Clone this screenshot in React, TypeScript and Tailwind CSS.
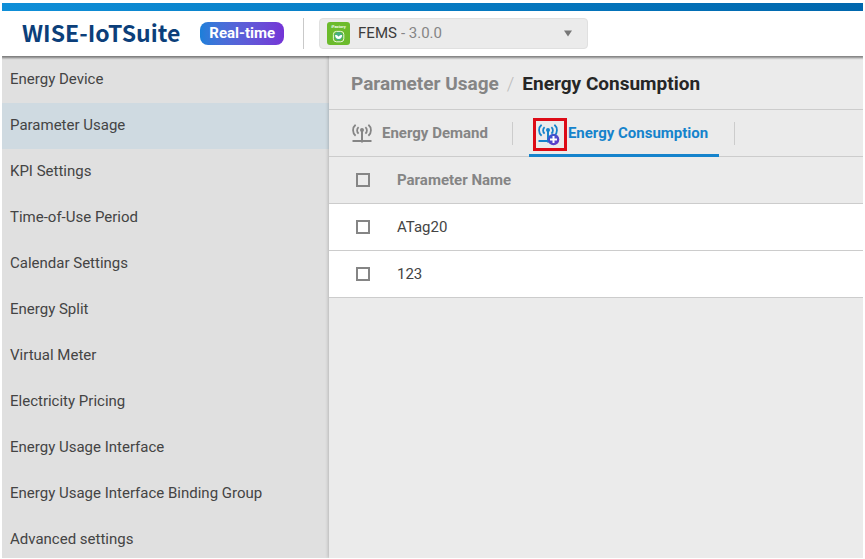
import React, { useState } from "react";

const menuItems = [
  "Energy Device",
  "Parameter Usage",
  "KPI Settings",
  "Time-of-Use Period",
  "Calendar Settings",
  "Energy Split",
  "Virtual Meter",
  "Electricity Pricing",
  "Energy Usage Interface",
  "Energy Usage Interface Binding Group",
  "Advanced settings",
];

const parameters = ["ATag20", "123"];

function AntennaIcon({ withPlus = false }: { withPlus?: boolean }) {
  return (
    <svg
      className="h-5 w-5 shrink-0 overflow-visible"
      viewBox="0 0 20 20"
      fill="none"
      stroke="currentColor"
      strokeWidth="1.8"
      aria-hidden="true"
    >
      <path d="M3.6 1.8C.2 4.6.2 10 3.6 12.8M6.6 4.2C4.6 6 4.6 8.8 6.6 10.6M16.4 1.8c3.4 2.8 3.4 8.2 0 11M13.4 4.2c2 1.8 2 4.600 0 6.400" />
      <path d="M10 7v12.5" strokeWidth="2" />
      <circle cx="10" cy="7" r="2" fill="currentColor" stroke="none" />
      <path d={withPlus ? "M.5 18H11" : "M.5 18h19"} strokeWidth="2" />
      {withPlus && (
        <g stroke="none">
          <defs>
            <linearGradient id="plusFill" x1="0" y1="0" x2="1" y2="1">
              <stop offset="0" stopColor="#2f5fd0" />
              <stop offset="1" stopColor="#6a35c8" />
            </linearGradient>
          </defs>
          <circle cx="15.5" cy="16.5" r="5.8" fill="url(#plusFill)" />
          <path d="M15.5 13v7M12 16.5h7" stroke="#fff" strokeWidth="2" />
        </g>
      )}
    </svg>
  );
}

function ProductIcon() {
  return (
    <svg className="h-[23px] w-[23px] shrink-0" viewBox="0 0 23 23" aria-hidden="true">
      <rect width="23" height="23" rx="3" fill="#6cbb2c" />
      <text
        x="11.5"
        y="6.2"
        textAnchor="middle"
        fontSize="4"
        fontWeight="700"
        fill="#f2fbe9"
        fontFamily="Roboto, sans-serif"
      >
        iFactory
      </text>
      <rect x="6.4" y="9.4" width="10.4" height="10.4" rx="3" fill="none" stroke="#e6f7dc" strokeWidth="1" />
      <circle cx="11.6" cy="14.2" r="4.2" fill="#45ae83" />
      <path d="M11.6 17c-2.4-.2-3.6-1.6-3.5-4 1.9 0 3 .6 3.5 1.8.5-1.2 1.6-1.8 3.5-1.8.1 2.4-1.1 3.8-3.5 4Z" fill="#fff" />
    </svg>
  );
}

function Tick({ label }: { label: string }) {
  return (
    <input
      type="checkbox"
      aria-label={label}
      className="block h-[14px] w-[14px] appearance-none border-2 border-[#858585] checked:bg-[#1583cc]"
    />
  );
}

function Header() {
  return (
    <header className="relative z-10 shrink-0 bg-white shadow-[0_1px_2px_1px_rgba(0,0,0,0.45)]">
      <div className="h-2 bg-linear-to-r from-[#0f8fd8] to-[#0067ad]" />
      <div className="flex h-[45px] items-center">
        <span className="ml-5 pb-[3px] font-['Noto_Sans_CJK_SC','Noto_Sans',sans-serif] text-[23px] leading-8 font-bold text-[#0c3f7a]">
          WISE-IoTSuite
        </span>
        <span className="ml-5 rounded-lg bg-linear-to-r from-[#1a7fd9] to-[#7433d6] px-[9px] leading-[23px] font-bold text-white">
          Real-time
        </span>
        <span className="ml-[19px] h-[31px] w-px bg-[#c9c9c9]" />
        <div className="relative ml-[15px] flex h-[31px] w-[269px] items-center rounded border border-[#e0e0e0] bg-[#ebebeb] pl-[7px]">
          <ProductIcon />
          <label htmlFor="version" className="ml-2 text-[#3c3c3c]">
            FEMS
          </label>
          <select
            id="version"
            className="h-full min-w-0 flex-1 cursor-pointer appearance-none bg-transparent pl-1 text-[#858585] outline-none"
          >
            <option>- 3.0.0</option>
          </select>
          <svg
            className="pointer-events-none absolute right-[15px] h-[7px] w-2"
            viewBox="0 0 8 7"
            fill="#777"
            aria-hidden="true"
          >
            <path d="M0 .5h8L4 6.5z" />
          </svg>
        </div>
      </div>
    </header>
  );
}

function Sidebar() {
  const [active, setActive] = useState("Parameter Usage");
  return (
    <nav className="w-[327px] shrink-0 overflow-hidden bg-[#e0e0e0] pt-px">
      <ul>
        {menuItems.map((item) => (
          <li key={item}>
            <a
              href="#"
              onClick={() => setActive(item)}
              aria-current={item === active ? "page" : undefined}
              className={`block h-[46px] pl-2 leading-[44px] ${item === active ? "bg-[#cfdae1]" : ""}`}
            >
              {item}
            </a>
          </li>
        ))}
      </ul>
    </nav>
  );
}

export default function App() {
  return (
    <div className="h-screen bg-white px-[2px] pt-[3px] pb-px font-[Roboto,'Liberation_Sans',sans-serif] text-[15px] text-[#444]">
      <div className="flex h-full flex-col overflow-hidden">
        <Header />
        <div className="flex min-h-0 flex-1">
          <Sidebar />
          <main className="min-w-0 flex-1 bg-[#ebebeb] shadow-[-1px_0_3px_rgba(0,0,0,0.18)]">
            <div className="flex h-[54px] items-center border-b border-[#cccccc] pt-1 pl-[22px] text-[19px] font-bold">
              <a href="#" className="text-[#858585]">
                Parameter Usage
              </a>
              <span className="mx-2 font-light text-[#bdbdbd]">/</span>
              <h1 className="text-[#262626]">Energy Consumption</h1>
            </div>
            <div role="tablist" className="flex h-[47px] items-center border-b border-[#cccccc] pl-[23px] font-bold">
              <button role="tab" aria-selected="false" className="flex items-center gap-[10px] text-[#858585]">
                <AntennaIcon />
                Energy Demand
              </button>
              <span className="ml-6 h-[23px] w-px bg-[#cccccc]" />
              <button
                role="tab"
                aria-selected="true"
                className="relative ml-4 flex h-[47px] items-center gap-[10px] pr-[11px] pl-[9px] text-[#1583cc] after:absolute after:inset-x-0 after:bottom-0 after:h-[3px] after:bg-[#1583cc]"
              >
                <AntennaIcon withPlus />
                Energy Consumption
                <span className="absolute top-2 left-1 h-[33px] w-[34px] border-3 border-[#dd0b16]" />
              </button>
              <span className="ml-[15px] h-[23px] w-px bg-[#cccccc]" />
            </div>
            <table className="w-full border-collapse text-left">
              <thead>
                <tr className="h-[46px] border-b border-[#cccccc] text-[#858585]">
                  <th className="w-[68px] pl-[27px]">
                    <Tick label="Select all" />
                  </th>
                  <th className="font-bold">Parameter Name</th>
                </tr>
              </thead>
              <tbody>
                {parameters.map((name) => (
                  <tr key={name} className="h-[47px] border-b border-[#cccccc] bg-white">
                    <td className="pl-[27px]">
                      <Tick label={`Select ${name}`} />
                    </td>
                    <td className="pt-0.5">{name}</td>
                  </tr>
                ))}
              </tbody>
            </table>
          </main>
        </div>
      </div>
    </div>
  );
}
